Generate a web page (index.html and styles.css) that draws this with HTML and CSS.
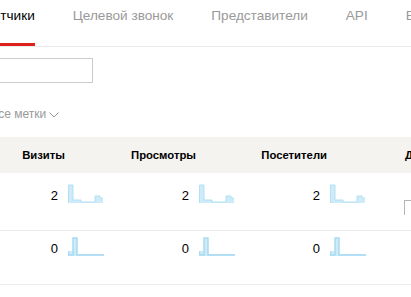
FILE: index.html
```html
<!DOCTYPE html>
<html lang="ru">
<head>
<meta charset="utf-8">
<link rel="stylesheet" href="styles.css">
</head>
<body>
<nav class="tabs">
  <a class="tab tab-active">Счётчики</a>
  <a class="tab">Целевой звонок</a>
  <a class="tab">Представители</a>
  <a class="tab">API</a>
  <a class="tab">Блог</a>
</nav>
<div class="search"><input class="search-input" type="text"></div>
<div class="labels">все метки
  <svg class="chev" width="10" height="6" viewBox="0 0 10 6"><path d="M0.5 0.5 L5 5 L9.5 0.5" fill="none" stroke="#999" stroke-width="1"/></svg>
</div>
<div class="table">
  <div class="row head">
    <div class="cell">Визиты</div>
    <div class="cell">Просмотры</div>
    <div class="cell">Посетители</div>
    <div class="cell last">Доля</div>
  </div>
  <div class="row r1">
    <div class="cell"><span class="num">2</span><svg class="spark" width="37" height="19" viewBox="0 0 37 19"><path d="M0 19 V1 H5 V16 H13 V18 H27 V12 H32 V14 H35 V19 Z" fill="#cdebf8"/><path d="M0.5 19 V1 H5 V16 H13 V18 H27 V12 H32 V14 H35" fill="none" stroke="#b3e0f3" stroke-width="1"/></svg></div>
    <div class="cell"><span class="num">2</span><svg class="spark" width="37" height="19" viewBox="0 0 37 19"><path d="M0 19 V1 H5 V16 H13 V18 H27 V12 H32 V14 H35 V19 Z" fill="#cdebf8"/><path d="M0.5 19 V1 H5 V16 H13 V18 H27 V12 H32 V14 H35" fill="none" stroke="#b3e0f3" stroke-width="1"/></svg></div>
    <div class="cell"><span class="num">2</span><svg class="spark" width="37" height="19" viewBox="0 0 37 19"><path d="M0 19 V1 H5 V16 H13 V18 H27 V12 H32 V14 H35 V19 Z" fill="#cdebf8"/><path d="M0.5 19 V1 H5 V16 H13 V18 H27 V12 H32 V14 H35" fill="none" stroke="#b3e0f3" stroke-width="1"/></svg></div>
    <div class="cell last"><span class="box"></span></div>
  </div>
  <div class="row r2">
    <div class="cell"><span class="num">0</span><svg class="spark" width="37" height="19" viewBox="0 0 37 19"><path d="M0 19 V14 H5 V1 H9 V17 H36 V19 Z" fill="#cdebf8"/><path d="M0.5 14 V18 H5 V1 H9 V18 H36" fill="none" stroke="#a9dcf1" stroke-width="1.5"/></svg></div>
    <div class="cell"><span class="num">0</span><svg class="spark" width="37" height="19" viewBox="0 0 37 19"><path d="M0 19 V14 H5 V1 H9 V17 H36 V19 Z" fill="#cdebf8"/><path d="M0.5 14 V18 H5 V1 H9 V18 H36" fill="none" stroke="#a9dcf1" stroke-width="1.5"/></svg></div>
    <div class="cell"><span class="num">0</span><svg class="spark" width="37" height="19" viewBox="0 0 37 19"><path d="M0 19 V14 H5 V1 H9 V17 H36 V19 Z" fill="#cdebf8"/><path d="M0.5 14 V18 H5 V1 H9 V18 H36" fill="none" stroke="#a9dcf1" stroke-width="1.5"/></svg></div>
    <div class="cell last"></div>
  </div>
</div>
</body>
</html>
```
FILE: styles.css
```css
html, body {
  margin: 0;
  padding: 0;
  background: #fff;
  overflow: hidden;
  font-family: "Liberation Sans", Arial, sans-serif;
  color: #000;
}
body {
  width: 411px;
  height: 297px;
}
.tabs {
  display: flex;
  gap: 38px;
  margin-left: -24px;
  width: 480px;
  border-bottom: 1px solid #ebebeb;
  white-space: nowrap;
}
.tab {
  display: block;
  font-size: 13.6px;
  line-height: 16px;
  padding: 8px 0 19px;
  border-bottom: 3px solid transparent;
  color: #999;
}
.tab-active {
  color: #000;
  border-bottom-color: #e0201d;
}
.search {
  margin-top: 11px;
  margin-left: -50px;
}
.search-input {
  display: block;
  box-sizing: border-box;
  width: 143px;
  height: 25px;
  margin: 0;
  border: 1px solid #cbcbcb;
  padding: 0 6px;
  background: #fff;
}
.labels {
  display: flex;
  align-items: center;
  gap: 3px;
  margin-top: 23px;
  margin-left: -8px;
  font-size: 12px;
  line-height: 16px;
  color: #999;
}
.chev {
  margin-top: 2px;
}
.table {
  margin-top: 15px;
  margin-left: -1px;
  width: 480px;
}
.row {
  display: grid;
  grid-template-columns: 131px 131px 131px 1fr;
  border-bottom: 1px solid #ebebeb;
}
.head {
  background: #f5f3f0;
  height: 36px;
  border-bottom: none;
  align-items: center;
}
.head .cell {
  justify-content: flex-end;
  padding-right: 65px;
  font-size: 11.3px;
  font-weight: bold;
}
.head .cell.last {
  justify-content: flex-start;
  padding: 0 0 0 13px;
}
.cell {
  display: flex;
  align-items: flex-end;
  justify-content: flex-end;
  gap: 10px;
  padding-right: 25px;
}
.cell.last {
  justify-content: flex-start;
  padding: 0 0 0 12px;
}
.r1 {
  height: 57px;
  align-items: start;
}
.r1 .cell {
  padding-top: 11px;
}
.r2 {
  height: 53px;
  align-items: start;
}
.r2 .cell {
  padding-top: 6px;
}
.num {
  font-size: 13px;
  line-height: 15px;
}
.spark {
  display: block;
}
.box {
  display: block;
  width: 40px;
  height: 14px;
  margin-top: 16px;
  border-top: 1px solid #b5b5b5;
  border-left: 1px solid #b5b5b5;
}
```
